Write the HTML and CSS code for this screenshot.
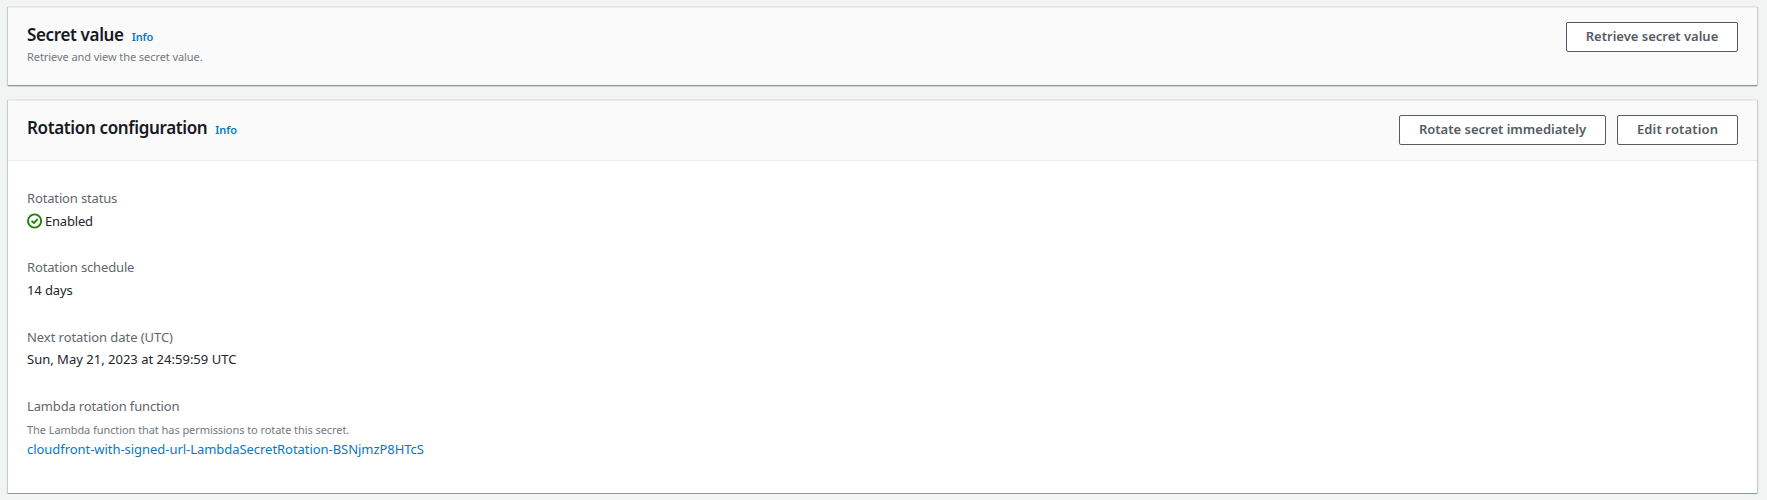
FILE: index.html
```
<!DOCTYPE html>
<html lang="en">
<head>
<meta charset="utf-8">
<title>Secret details</title>
<link rel="stylesheet" href="styles.css">
</head>
<body>
<main class="page">
  <section class="card">
    <header class="card-header card-header-only">
      <div class="heading">
        <h2 class="title">Secret value <a class="info">Info</a></h2>
        <p class="hint">Retrieve and view the secret value.</p>
      </div>
      <div class="actions"><button class="button button-retrieve">Retrieve secret value</button></div>
    </header>
  </section>
  <section class="card card-rotation">
    <header class="card-header">
      <div class="heading">
        <h2 class="title">Rotation configuration <a class="info">Info</a></h2>
      </div>
      <div class="actions">
        <button class="button button-rotate">Rotate secret immediately</button>
        <button class="button button-edit">Edit rotation</button>
      </div>
    </header>
    <dl class="details">
      <div class="field">
        <dt class="label">Rotation status</dt>
        <dd class="value status">
          <svg class="status-icon" viewBox="0 0 16 16" width="16" height="16"><circle cx="7.6" cy="8" r="6.6"/><path d="M4.5 7.9 6.8 10 10.7 6.1"/></svg>
          <span>Enabled</span>
        </dd>
      </div>
      <div class="field">
        <dt class="label">Rotation schedule</dt>
        <dd class="value">14 days</dd>
      </div>
      <div class="field field-compact">
        <dt class="label label-date">Next rotation date (UTC)</dt>
        <dd class="value date">Sun, May 21, 2023 at 24:59:59 UTC</dd>
      </div>
      <div class="field field-compact">
        <dt class="label">Lambda rotation function</dt>
        <dd class="description">The Lambda function that has permissions to rotate this secret.</dd>
        <dd class="value function"><a class="link">cloudfront-with-signed-url-LambdaSecretRotation-BSNjmzP8HTcS</a></dd>
      </div>
    </dl>
  </section>
</main>
</body>
</html>
```
FILE: styles.css
```
* { box-sizing: border-box; }
body { margin: 0; background: #f2f3f3; color: #22252b; font-family: "Noto Sans", "Open Sans", sans-serif; font-size: 13px; }
h2, p, dl, dt, dd { margin: 0; }
.page { display: flex; flex-direction: column; gap: 14px; padding: 7px 10px 0 8px; }
.card { height: 79px; background: #fff; border-top: 1px solid #eaeded; border-bottom: 1px solid #8b9a9b; box-shadow: 0 1px 0 0 rgba(0,28,36,.08), 1px 0 1px 0 rgba(0,28,36,.18), -1px 0 1px 0 rgba(0,28,36,.18); }
.card-rotation { height: 394px; }
.card-header { display: flex; justify-content: space-between; height: 60px; padding: 14px 19px 0 19px; background: #fafafa; border-bottom: 1px solid #eaeded; }
.card-header-only { height: 77px; border-bottom: 0; }
.title { display: flex; align-items: baseline; gap: 8px; color: #16191f; font-size: 17px; font-weight: 600; line-height: 26px; letter-spacing: -.36px; }
.info { color: #0a78c0; font-size: 11px; font-weight: 600; letter-spacing: -.1px; }
.hint, .description { color: #72797f; font-size: 11px; line-height: 16px; letter-spacing: -.07px; }
.hint { margin-top: -1px; }
.actions { display: flex; gap: 11px; }
.button { height: 30px; padding: 0 0 2px; border: 1px solid #545b64; border-radius: 2px; background: #fff; color: #545b64; font: 600 13px/24px "Noto Sans", "Open Sans", sans-serif; white-space: nowrap; }
.button-retrieve { width: 172px; }
.button-rotate { width: 207px; }
.button-edit { width: 121px; letter-spacing: .15px; }
.details { display: flex; flex-direction: column; gap: 24px; padding: 26px 19px; }
.label { color: #5f666e; line-height: 23px; letter-spacing: -.15px; }
.label-date { letter-spacing: -.06px; }
.value { line-height: 22px; letter-spacing: -.1px; }
.date { letter-spacing: .01px; }
.description { margin-top: 5px; }
.field-compact { padding-top: 1px; }
.field-compact .label { height: 22px; }
.function { letter-spacing: -.045px; }
.status { display: flex; align-items: center; gap: 2px; letter-spacing: -.2px; }
.status-icon { fill: none; stroke: #1d8102; stroke-width: 1.9; }
.link { color: #0a78c0; }
```
